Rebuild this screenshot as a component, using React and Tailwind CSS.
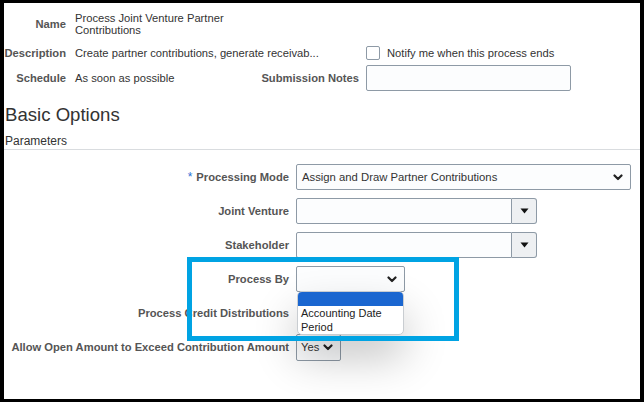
import React from "react";

const Chevron = ({ className = "" }) => (
  <svg width="10" height="7" viewBox="0 0 10 7" className={className}>
    <polyline points="1.5,1.5 5,5 8.5,1.5" fill="none" stroke="#222" strokeWidth="2.2" strokeLinecap="round" strokeLinejoin="round" />
  </svg>
);

const Tri = () => (
  <svg width="9" height="6" viewBox="0 0 9 6">
    <polygon points="0.5,0.5 8.5,0.5 4.5,5.5" fill="#111" />
  </svg>
);

const Label = ({ children, req }) => (
  <div className="flex h-[26px] items-center justify-end text-[11.2px] font-bold text-[#555] whitespace-nowrap">
    {req && <span className="mr-[4px] text-[12px] font-normal text-[#2b6fd6]">*</span>}
    {children}
  </div>
);

const LovInput = () => (
  <div className="flex h-[26px] w-[241px]">
    <div className="h-full w-[216px] rounded-l-[2px] border border-[#8e9aa6] bg-[#fcfdfe]" />
    <div className="flex h-full w-[25px] items-center justify-center rounded-r-[3px] border border-l-0 border-[#8e9aa6] bg-[#eef0f2]">
      <Tri />
    </div>
  </div>
);

const HLabel = ({ className = "", children }) => (
  <div className={`text-right text-[11.2px] font-bold text-[#555] whitespace-nowrap ${className}`}>{children}</div>
);

export default function App() {
  return (
    <div className="h-[402px] w-[644px] bg-black pt-[3px] pl-[4px] pr-[4px] pb-[3px] font-['Liberation_Sans',Arial,sans-serif]">
      <div className="relative h-[396px] w-[636px] overflow-hidden bg-white text-[11.2px] text-[#333]">
        {/* Header */}
        <div className="pt-[9px]">
          <div className="flex items-center">
            <HLabel className="w-[62px]">Name</HLabel>
            <div className="ml-[9px] w-[185px] leading-[12px]">
              Process Joint Venture Partner
              <br />
              Contributions
            </div>
          </div>
          <div className="mt-[10px] flex h-[14px] items-center">
            <HLabel className="w-[62px]">Description</HLabel>
            <div className="ml-[9px] w-[291px] whitespace-nowrap">Create partner contributions, generate receivab...</div>
            <div className="h-[14px] w-[14px] rounded-[2px] border border-[#8e9aa6] bg-white" />
            <div className="ml-[7px] whitespace-nowrap">Notify me when this process ends</div>
          </div>
          <div className="mt-[5px] flex h-[26px] items-center">
            <HLabel className="w-[62px]">Schedule</HLabel>
            <div className="ml-[9px] w-[180px] whitespace-nowrap">As soon as possible</div>
            <HLabel className="w-[104px]">Submission Notes</HLabel>
            <div className="ml-[7px] h-[26px] w-[205px] rounded-[2px] border border-[#8e9aa6] bg-[#fcfdfe]" />
          </div>
        </div>

        {/* Basic options */}
        <div className="mt-[13px] pl-[1px] text-[18.6px] leading-[22px] text-[#333]">Basic Options</div>
        <div className="mt-[8px] border-b border-[#d9dcdf] pb-[1px] pl-[1px] text-[12px] leading-[14px] text-[#333]">Parameters</div>

        {/* Form */}
        <div className="mt-[14px] grid grid-cols-[285px_1fr] gap-x-[7px] gap-y-[8px]">
          <Label req>Processing Mode</Label>
          <div className="flex h-[26px] w-[335px] items-center justify-between rounded-[2px] border border-[#8e9aa6] bg-[#fcfdfe] pl-[5px] pr-[7px]">
            <span className="text-[11.3px]">Assign and Draw Partner Contributions</span>
            <Chevron />
          </div>

          <Label>Joint Venture</Label>
          <LovInput />

          <Label>Stakeholder</Label>
          <LovInput />

          <Label>Process By</Label>
          <div className="relative h-[26px] w-[109px]">
            <div className="flex h-full w-full items-center justify-end rounded-[2px] border border-[#8e9aa6] bg-[#fcfdfe] pr-[7px]">
              <Chevron />
            </div>
            <div className="absolute left-[1px] top-[25px] z-10 w-[107px] overflow-hidden rounded-[5px] border border-[#c9cdd1] bg-white text-[11px] leading-[14px] text-[#222] shadow-[0_22px_44px_rgba(0,0,0,0.24)]">
              <div className="h-[14px] bg-[#1a66d0]" />
              <div className="pl-[3px]">Accounting Date</div>
              <div className="pl-[3px]">Period</div>
            </div>
          </div>

          <Label>Process Credit Distributions</Label>
          <div className="h-[26px]" />

          <Label>Allow Open Amount to Exceed Contribution Amount</Label>
          <div className="flex h-[27px] w-[45px] items-center gap-[4px] rounded-[2px] border border-[#8e9aa6] bg-[#fcfdfe] pl-[4px]">
            <span>Yes</span>
            <Chevron />
          </div>
        </div>

        {/* Annotation rectangle */}
        <div className="pointer-events-none absolute left-[183px] top-[254px] z-20 h-[84px] w-[272px] border-[5px] border-[#00a3e3]" />
      </div>
    </div>
  );
}
